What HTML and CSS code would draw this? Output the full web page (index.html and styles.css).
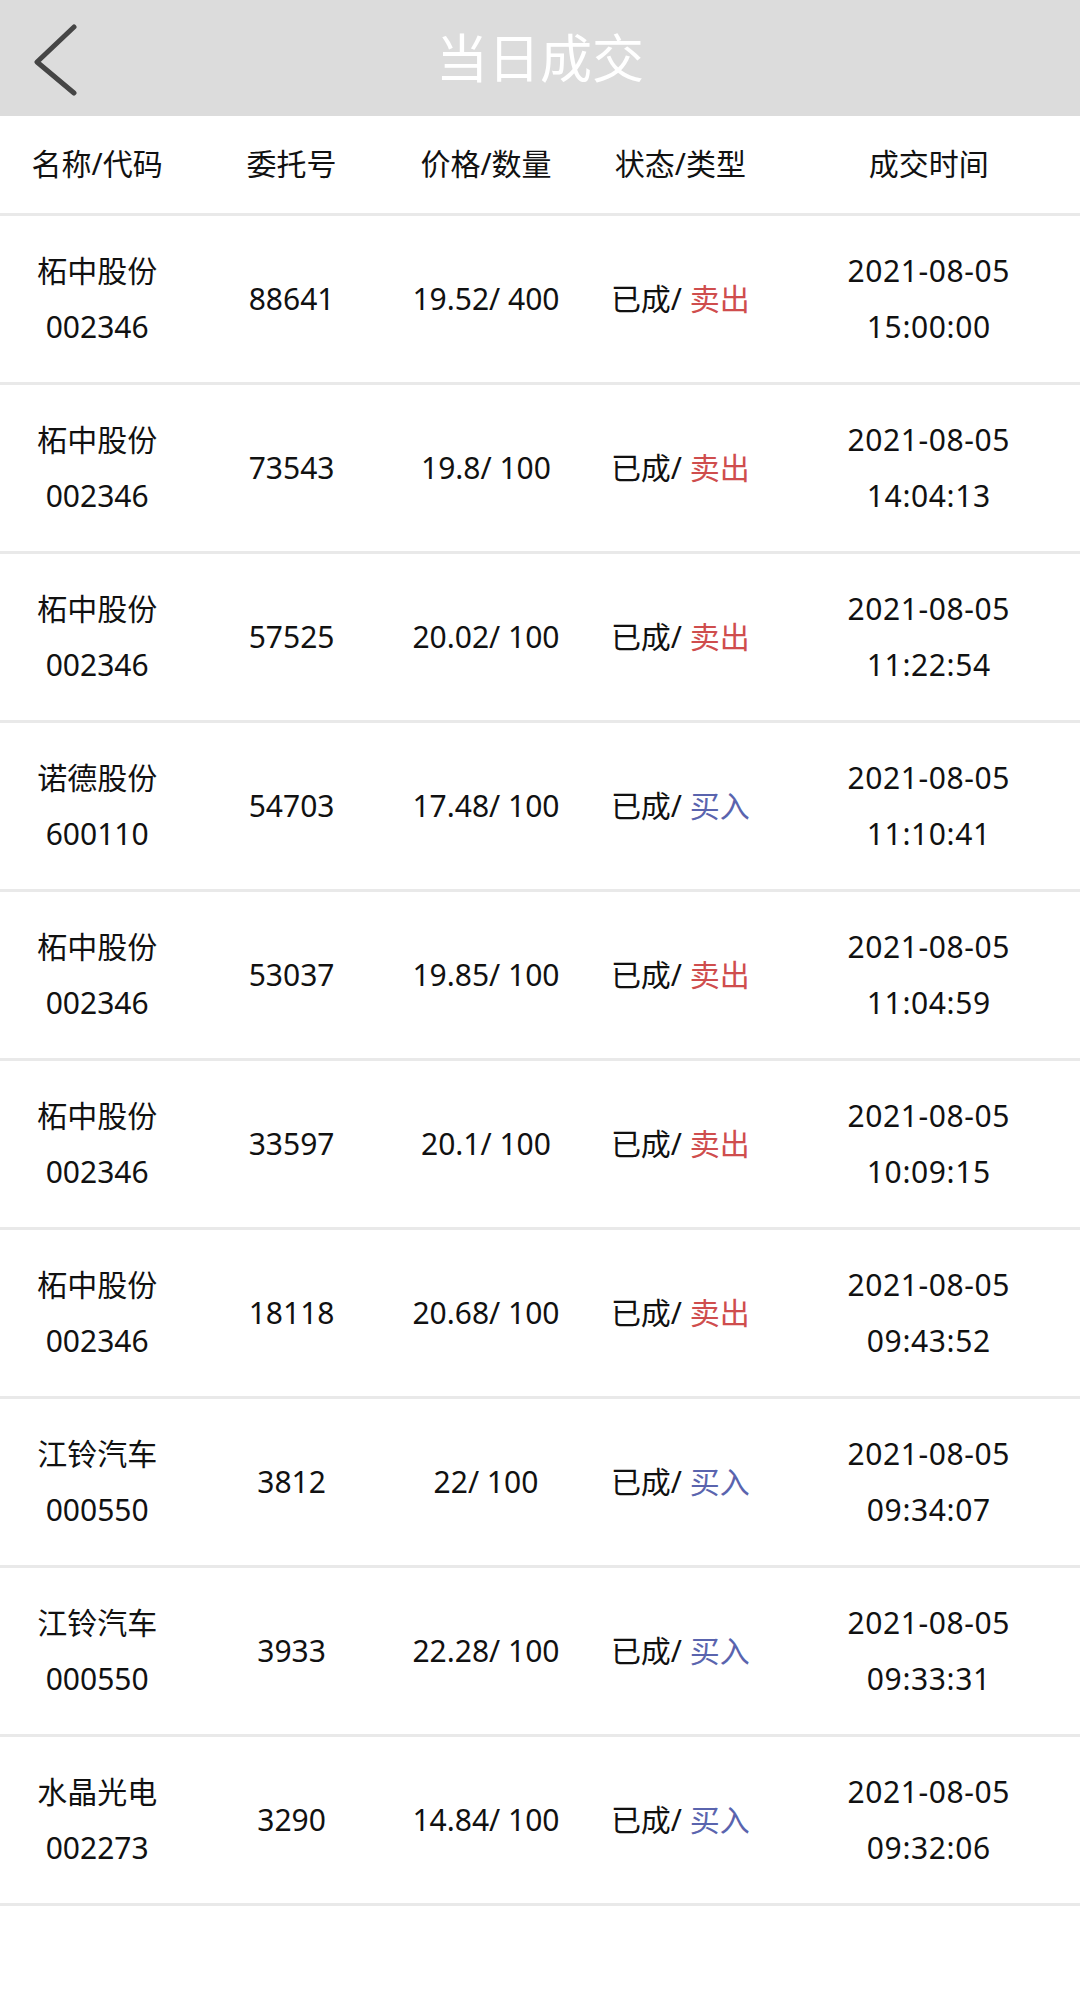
FILE: index.html
```html
<!DOCTYPE html>
<html lang="zh-CN">
<head>
<meta charset="utf-8">
<title>当日成交</title>
<link rel="stylesheet" href="styles.css">
</head>
<body>
<header class="topbar">
  <div class="back">
    <svg width="50" height="74" viewBox="0 0 50 74"><polyline points="41,5 4,40 41,71" fill="none" stroke="#454545" stroke-width="5" stroke-linecap="round" stroke-linejoin="round"/></svg>
  </div>
  <h1 class="title">当日成交</h1>
  <div></div>
</header>
<div class="table">
  <div class="row head">
    <div class="cell">名称/代码</div>
    <div class="cell">委托号</div>
    <div class="cell">价格/数量</div>
    <div class="cell">状态/类型</div>
    <div class="cell">成交时间</div>
  </div>

  <div class="row">
    <div class="cell two"><span>柘中股份</span><span>002346</span></div>
    <div class="cell">88641</div>
    <div class="cell">19.52/ 400</div>
    <div class="cell">已成/&nbsp;<span class="sell">卖出</span></div>
    <div class="cell two time"><span>2021-08-05</span><span>15:00:00</span></div>
  </div>
  <div class="row">
    <div class="cell two"><span>柘中股份</span><span>002346</span></div>
    <div class="cell">73543</div>
    <div class="cell">19.8/ 100</div>
    <div class="cell">已成/&nbsp;<span class="sell">卖出</span></div>
    <div class="cell two time"><span>2021-08-05</span><span>14:04:13</span></div>
  </div>
  <div class="row">
    <div class="cell two"><span>柘中股份</span><span>002346</span></div>
    <div class="cell">57525</div>
    <div class="cell">20.02/ 100</div>
    <div class="cell">已成/&nbsp;<span class="sell">卖出</span></div>
    <div class="cell two time"><span>2021-08-05</span><span>11:22:54</span></div>
  </div>
  <div class="row">
    <div class="cell two"><span>诺德股份</span><span>600110</span></div>
    <div class="cell">54703</div>
    <div class="cell">17.48/ 100</div>
    <div class="cell">已成/&nbsp;<span class="buy">买入</span></div>
    <div class="cell two time"><span>2021-08-05</span><span>11:10:41</span></div>
  </div>
  <div class="row">
    <div class="cell two"><span>柘中股份</span><span>002346</span></div>
    <div class="cell">53037</div>
    <div class="cell">19.85/ 100</div>
    <div class="cell">已成/&nbsp;<span class="sell">卖出</span></div>
    <div class="cell two time"><span>2021-08-05</span><span>11:04:59</span></div>
  </div>
  <div class="row">
    <div class="cell two"><span>柘中股份</span><span>002346</span></div>
    <div class="cell">33597</div>
    <div class="cell">20.1/ 100</div>
    <div class="cell">已成/&nbsp;<span class="sell">卖出</span></div>
    <div class="cell two time"><span>2021-08-05</span><span>10:09:15</span></div>
  </div>
  <div class="row">
    <div class="cell two"><span>柘中股份</span><span>002346</span></div>
    <div class="cell">18118</div>
    <div class="cell">20.68/ 100</div>
    <div class="cell">已成/&nbsp;<span class="sell">卖出</span></div>
    <div class="cell two time"><span>2021-08-05</span><span>09:43:52</span></div>
  </div>
  <div class="row">
    <div class="cell two"><span>江铃汽车</span><span>000550</span></div>
    <div class="cell">3812</div>
    <div class="cell">22/ 100</div>
    <div class="cell">已成/&nbsp;<span class="buy">买入</span></div>
    <div class="cell two time"><span>2021-08-05</span><span>09:34:07</span></div>
  </div>
  <div class="row">
    <div class="cell two"><span>江铃汽车</span><span>000550</span></div>
    <div class="cell">3933</div>
    <div class="cell">22.28/ 100</div>
    <div class="cell">已成/&nbsp;<span class="buy">买入</span></div>
    <div class="cell two time"><span>2021-08-05</span><span>09:33:31</span></div>
  </div>
  <div class="row">
    <div class="cell two"><span>水晶光电</span><span>002273</span></div>
    <div class="cell">3290</div>
    <div class="cell">14.84/ 100</div>
    <div class="cell">已成/&nbsp;<span class="buy">买入</span></div>
    <div class="cell two time"><span>2021-08-05</span><span>09:32:06</span></div>
  </div>
</div>
</body>
</html>
```

FILE: styles.css
```css
* { box-sizing: border-box; }
html, body { margin: 0; padding: 0; background: #ffffff; }
body {
  width: 1080px;
  font-family: "Noto Sans", "Noto Sans CJK SC", sans-serif;
  color: #111111;
}
.topbar {
  height: 116px;
  background: #dcdcdc;
  display: grid;
  grid-template-columns: 1fr auto 1fr;
  align-items: center;
}
.back {
  padding-left: 33px;
  display: flex;
  align-items: center;
  height: 116px;
  padding-top: 2px;
}
.back svg { display: block; }
.title {
  margin: 0;
  font-size: 52px;
  font-weight: 400;
  color: #ffffff;
  line-height: 1;
}
.table { display: flex; flex-direction: column; }
.row {
  display: grid;
  grid-template-columns: 194.4px 194.4px 194.4px 194.4px 1fr;
  height: 169px;
  border-bottom: 3px solid #e9e9e9;
  align-items: center;
  font-size: 30px;
}
.row.head { height: 100px; padding-bottom: 2px; }
.cell {
  display: flex;
  justify-content: center;
  align-items: center;
  white-space: nowrap;
  line-height: 56px;
}
.cell.two { flex-direction: column; }
.cell.two span { display: block; line-height: 56px; }
.cell.time span { letter-spacing: 0.6px; }
.sell { color: #cf4d4d; }
.buy { color: #5a64ae; }
```
